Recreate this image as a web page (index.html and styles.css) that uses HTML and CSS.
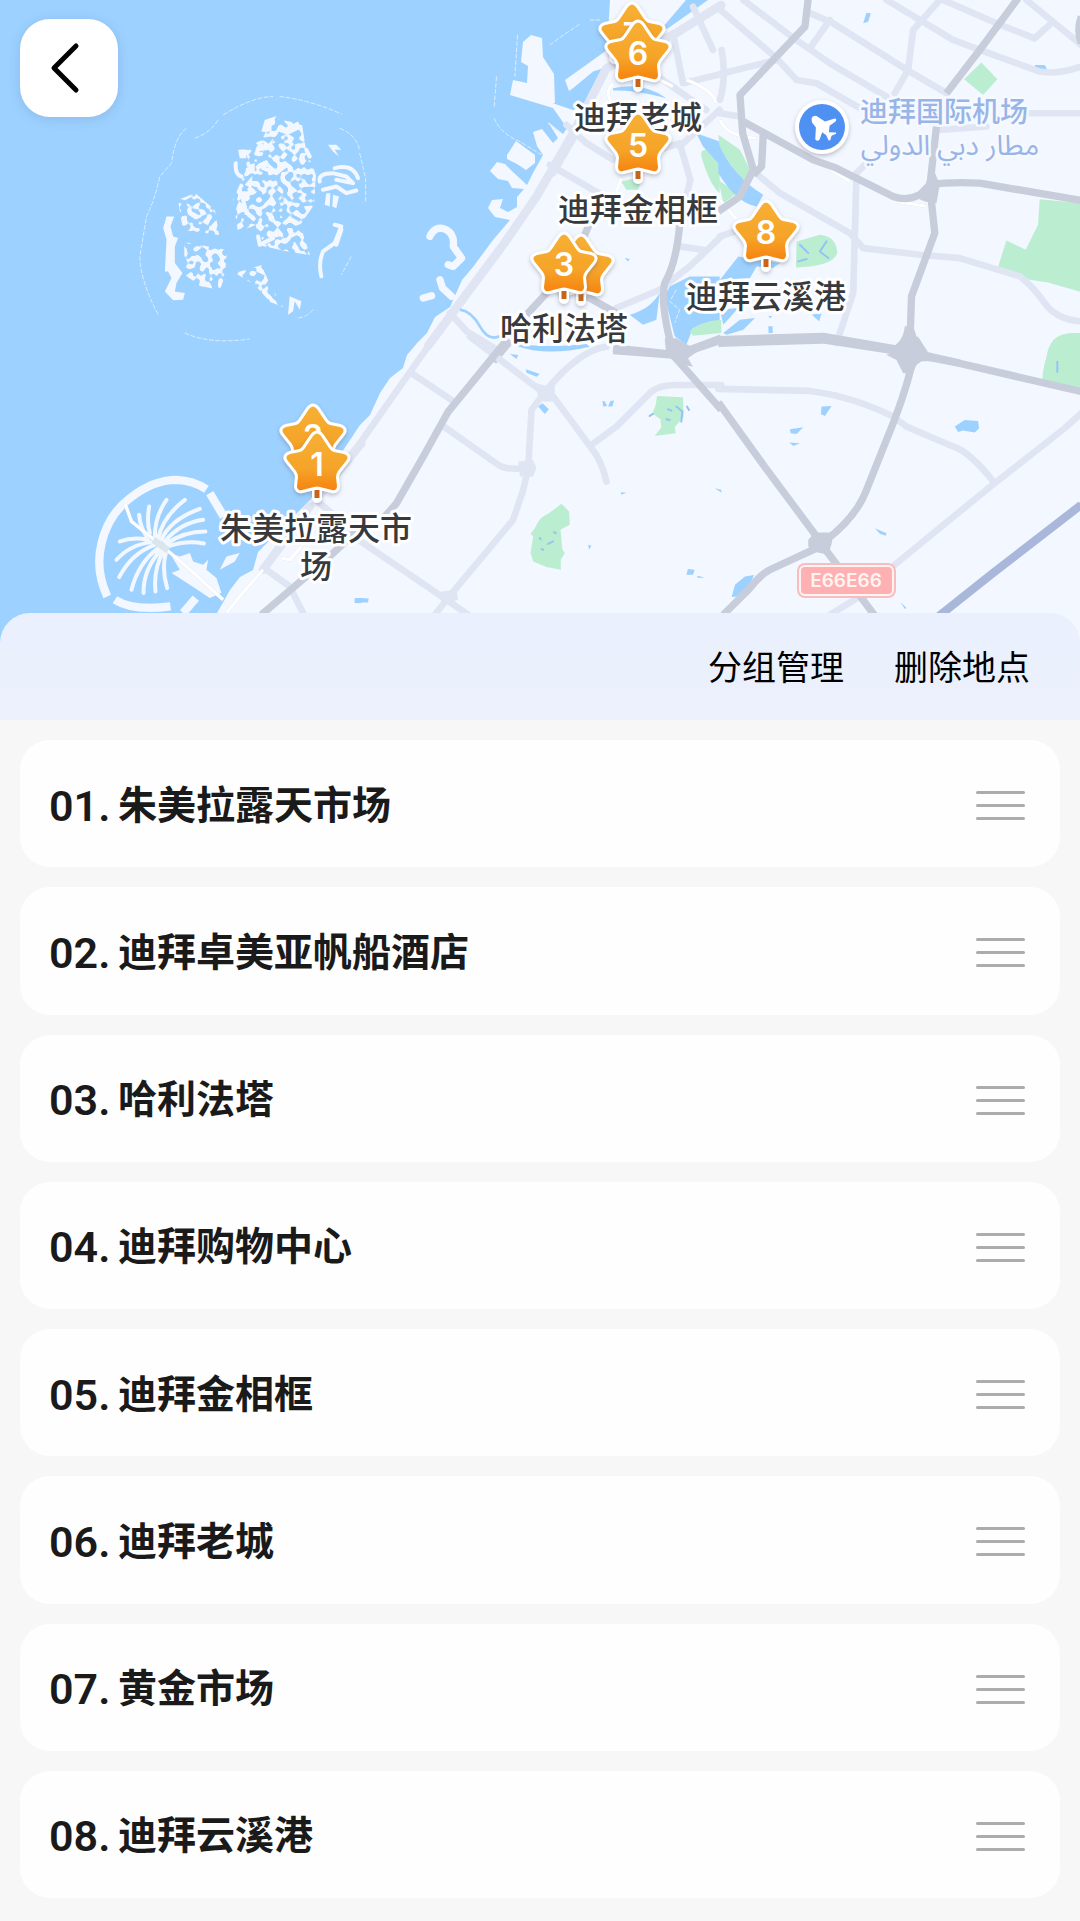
FILE: index.html
```html
<!DOCTYPE html>
<html lang="zh-CN">
<head>
<meta charset="utf-8">
<meta name="viewport" content="width=device-width, initial-scale=1">
<title>地点管理</title>
<link rel="stylesheet" href="styles.css">
</head>
<body>
<main class="page">
  <section class="map" aria-label="迪拜地图">
    <svg class="map-canvas" viewBox="0 0 1080 650" preserveAspectRatio="xMidYMin slice">
      <defs>
        <linearGradient id="gold" x1="0" y1="0" x2="0" y2="1">
          <stop offset="0" stop-color="#f7b033"/>
          <stop offset=".62" stop-color="#f5a429"/>
          <stop offset="1" stop-color="#f68410"/>
        </linearGradient>
        <filter id="lift" x="-30%" y="-30%" width="160%" height="160%">
          <feDropShadow dx="0" dy="2" stdDeviation="2" flood-color="#5b6478" flood-opacity=".4"/>
        </filter>
        <filter id="islets" x="0" y="0" width="1" height="1" color-interpolation-filters="sRGB">
          <feTurbulence type="fractalNoise" baseFrequency=".16" numOctaves="1" seed="8"/>
          <feColorMatrix values="0 0 0 0 1  0 0 0 0 1  0 0 0 0 1  16 0 0 0 -7.7" result="grain"/>
          <feComposite in="SourceGraphic" in2="grain" operator="in"/>
        </filter>
        <g id="star">
          <path class="stem-edge" d="M0 26V34"/>
          <path class="star-body" d="M-4-28Q0-33 4-28L12-16Q14-13 17-12L27-10Q33-8 29-3L21 7Q19 10 19 13L20 22Q20 27 15 26L3 23Q0 22-3 23L-15 26Q-20 27-20 22L-19 13Q-19 10-21 7L-29-3Q-33-8-27-10L-17-12Q-14-13-12-16Z"/>
          <path class="stem" d="M0 26V34"/>
        </g>
      </defs>

      <rect class="sea" width="1080" height="650"/>

      <!-- mainland -->
      <path class="land" d="M190 650L217 613 230 590 240 577 253 570 258 552 280 530 310 500 340 455 360 425 370 415 380 393 390 378 403 368 407 355 418 342 427 333 435 317 450 307 462 280 473 267 493 240 510 220 495 217 488 208 492 200 503 199 500 208 508 212 517 207 517 197 524 189 512 188 508 181 498 179 490 171 497 162 505 164 513 172 527 185 533 173 543 155 537 146 533 132 542 129 553 143 558 138 548 122 563 134 567 128 553 108 510 95 513 80 527 83 528 66 521 62 523 42 531 35 542 38 543 57 554 74 555 104 573 110 580 107 592 95 598 76 604 68 569 91 565 80 607 50 610 0H1080V650Z"/>
      <path class="land" d="M507 155L516 141 535 155 535 163 526 170 517 164 507 159Z"/>
      <path class="sea" d="M663 27L686 0H708L667 29Z"/>

      <!-- The World archipelago -->
      <path class="land" filter="url(#islets)" d="M262 140L272 118 302 124 306 150 316 175 314 205 300 225 310 255 290 252 258 245 256 225 238 232 233 200 246 170 240 150ZM178 200L195 193 215 210 219 235 183 230ZM184 242L227 250 225 275 220 290 200 286 185 275ZM235 273L262 265 270 285 283 307 270 302 255 285Z"/>
      <g transform="scale(.333)">
        <path class="land" d="M795 360L830 348 805 398 785 395ZM835 395L895 365 905 385 865 405ZM765 455L780 425 800 440 820 415 815 450ZM715 450L735 450 740 475 720 475ZM745 495L765 490 765 520 748 520ZM735 555L758 528 755 565ZM985 435L1010 435 1025 450 1005 450 1018 470 1000 455ZM500 650L523 650 512 680 520 710 535 715 525 740 525 790 548 820 530 850 525 875 555 880 550 900 520 902 495 875 515 835 505 815 495 815 500 720 490 685ZM865 945L870 890 905 905 900 930 885 905 880 935ZM980 580L992 580 990 620 975 615ZM1000 585L1018 590 1010 625 998 620Z"/>
        <path class="isle-line" stroke-width="12" d="M960 545Q955 520 1000 520L1040 530 1060 550 1010 540M970 570L1010 560 1040 580 1070 572M1005 505Q1060 490 1075 535M1005 675L1025 680 1005 730 970 755Q955 790 965 830M1025 690L1010 735M775 710L780 735 820 715M720 580L750 580 730 600 740 640M790 505L830 520 855 500M920 450L930 470M708 490Q705 525 725 530"/>
        <path class="reef" d="M560 385Q525 410 515 490L480 530Q465 600 440 650L420 770Q420 840 475 945M585 415Q630 400 655 360M670 345Q760 290 820 290M840 290Q930 300 1025 342M1020 385Q1070 405 1080 450M1055 770L1025 825M940 930Q920 955 890 955M555 1000Q630 1035 750 1018M1080 460Q1095 520 1098 540V605"/>
      </g>

      <!-- northern coast and creek -->
      <g transform="translate(360 0) scale(.333)">
        <path class="green" d="M785 545L850 530 835 570 800 570ZM1025 455L1080 430V580Q1050 555 1025 470Z"/>
        <path class="isle-line" stroke-width="22" d="M210 710Q225 675 260 690 285 705 280 740L305 775 280 800 265 795M240 840L248 865 275 890M190 895L215 888"/>
        <path class="reef" d="M473 105L465 230M410 230L403 320M403 355Q420 400 480 425L545 465M570 135Q610 105 660 72M690 60L720 60M565 370L600 400"/>
        <path class="sea" d="M580 312L690 295 730 205 700 215 610 290ZM760 265Q850 245 920 295L880 285Q810 270 760 272ZM1010 400L1080 425 1085 500 1030 440ZM810 945Q870 930 900 880L890 960 850 975ZM930 860L990 830H1080V970L1000 985 980 1035 945 1010 915 890ZM795 775L810 778 805 785Z"/>
        <path class="green" d="M990 995Q1020 965 1085 960V1000L1000 1008Z"/>
        <path class="reef" d="M950 870L930 905 960 930 945 970"/>
        <path class="road arterial" d="M205 1038L285 930 430 735 530 590 640 400 740 205 940 105 1085 15"/>
        <path class="road" d="M620 375L680 430 760 480M570 495L700 570 755 600M270 940L320 995 420 1055M940 100L970 250 1085 222M1000 20L1060 150M880 220L1040 330M960 440L1080 330M900 450L960 430 992 540 960 680M1085 710L990 800 900 870 770 925M960 740L1030 750M650 400L580 520"/>
        <path class="street" d="M760 250Q730 280 765 320M890 235L940 260M980 240Q1060 270 1070 310M785 535L765 590"/>
        <path class="highway" d="M690 670L660 740M565 875L500 945M680 890L770 940M960 675Q950 790 915 850 900 920 945 1075M760 1045L950 1065 1085 1015M400 1085L450 1025"/>
        <path class="stream" d="M300 930Q335 935 360 980T420 1010"/>
      </g>

      <!-- airport quarter -->
      <g transform="translate(720 0) scale(.333)">
        <path class="green" d="M733 238L785 188 833 238 790 285ZM960 598L1085 610V877L985 848 930 840 835 802 860 722 918 750 955 675ZM230 725L300 705Q350 710 352 760 340 800 228 803ZM-5 405L60 450 95 520 80 560 0 450ZM-5 540L50 580 10 610ZM980 1080Q985 1000 1060 1000H1085V1090Z"/>
        <path class="sea" d="M-5 430Q40 530 130 585L110 620Q50 610-5 520ZM55 770L180 790 160 805 110 800 90 835 0 840ZM275 945L305 940 298 965ZM430 70L440 38 453 40 445 65ZM945 195L975 195 982 208 950 212ZM145 980H158V1000H146ZM0 930L55 925 10 975ZM10 1000L60 960 105 955 70 990 20 1005ZM145 950L158 948 150 956Z"/>
        <path class="brook" d="M240 735L265 760M320 725L300 755 325 775M235 785L260 778"/>
        <path class="road" d="M-10 20L170 175 230 240 290 250 420 325M70 0L215 110 330 190 500 290M260 35L340 70 570 215 680 280M330 60L270 145M500 0L600 60 700 120 780 150 960 215Q1010 225 1085 200M660 0L580 90 565 210 525 280M670 0L830 70 945 115 1000 65M920 0L1085 135M0 222L170 180M5 150Q20 230 0 300M660 390L800 380M930 340H1085M120 530L180 580 390 700 430 745 600 765 720 775 900 830Q940 860 975 910T1085 965M440 490L410 520 405 700 400 880 350 1030M0 340L60 350M0 710L60 690"/>
        <path class="street" d="M0 360Q20 410 110 415M200 430L270 470 390 545M0 600L50 660M530 605L620 620"/>
        <path class="highway" d="M265-5L255 80 60 285 68 400 100 510 60 590-5 635M70 365L280 480 350 505 520 590Q560 605 600 585L635 550M130 400L125 500 100 525M895-5L780 150 680 280M650 380L630 560 645 700 575 890 570 1045M620 555Q700 545 780 550L1085 602M-5 1020L310 1010 540 1050 720 1090M1085 50Q1070 90 1085 130"/>
        <path class="junction" d="M638 500L660 555 650 610 615 605 580 590 620 550ZM555 980H580L600 1040 640 1085H560L510 1045Q550 1030 555 980Z"/>
      </g>

      <!-- Palm Jumeirah -->
      <g transform="translate(0 340) scale(.333)">
        <path class="isle-line breakwater" stroke-width="25" d="M322 770Q285 690 305 610 325 525 390 475 460 420 530 420 580 422 620 448M630 460L672 530M345 780Q400 815 512 800M588 775L550 820"/>
        <path class="isle-line" stroke-width="12" d="M440 590Q420 560 418 525M450 580Q440 545 448 500M465 590Q465 530 500 480M475 595Q490 530 555 480M485 600Q510 540 600 507M495 605Q540 550 610 540M500 612Q550 575 617 575M505 620Q560 600 612 611M445 600Q400 590 360 605M455 607Q390 615 350 660M465 615Q395 640 358 712M475 625Q415 670 395 750M482 632Q430 690 431 760M490 635Q460 690 467 755M498 640Q485 690 502 745"/>
        <path class="land" d="M510 640L540 650 570 640 580 665 610 675 625 660 620 690 650 715 665 760 630 775 570 735 515 700 540 690ZM660 690L680 650 720 640 705 665Z"/>
        <path class="street" d="M375 490L395 545 500 630 560 680 670 780"/>
        <path class="mid-quay" d="M460 600L505 632"/>
        <path class="road arterial" d="M930 500L790 690M1085 310L960 465"/>
        <path class="road" d="M800 690L870 740 910 820M960 490L1080 590"/>
        <path class="street" d="M680 820L720 770 790 690M845 655L870 660 905 620"/>
        <path class="highway" d="M785 825L990 650 1085 560"/>
        <path class="sea" d="M1065 775H1085V790H1065Z"/>
      </g>

      <!-- southern inland -->
      <g transform="translate(360 340) scale(.333)">
        <path class="green" d="M892 168L970 172 972 230 945 262 948 280 885 288 905 262 902 238 878 220 888 195ZM605 492L628 515 630 555 602 570 608 630 615 640 603 660V690L560 682 520 665 512 640 520 590 512 582 525 565Q540 530 565 522Z"/>
        <path class="brook" d="M925 208L935 212M920 238L930 240M950 200L968 215 965 245M540 595L542 598M565 612L580 605M545 628L550 630M583 577L588 580M982 200L988 210M870 228L880 222"/>
        <path class="sea" d="M470 10Q540 25 680 12L690 20Q560 50 470 18ZM498 88L540 102 530 110 500 98ZM535 200L548 190 567 208 555 222ZM728 183L735 184 742 198 730 200ZM752 183L763 182 758 200 745 200ZM450 42L475 45 470 57ZM783 457L800 459 785 465ZM1065 445L1085 450V458ZM685 615L695 618 688 630ZM868 675L885 682ZM985 688L1005 690 1000 705 980 705ZM1012 708L1035 713 1015 715ZM0 775L26 776 24 788H0Z"/>
        <path class="road" d="M225-10L0 310M155 100L275 180M245 255L420 378Q440 390 500 385M330-10L540 150 580 170 640 250 695 325Q725 360 740 425M740 20Q660 30 560 150L515 210 505 385 490 450 460 540 260 780 225 825M-5 600L260 780 325 825M695 315L770 260 875 155Q900 135 950 135H1085"/>
        <path class="road-node" d="M530 130L560 138 585 130V185H535ZM475 365L520 360 530 385 520 410H480ZM245 755L290 750 295 780 245 795Z"/>
        <path class="highway" d="M445-5L265 215 190 350 110 490 75 530M760 32L940 45 1085 210M940 50L1085 0"/>
        <path class="junction" d="M915-5H950L985 15 1020 30 985 55 1000 80 950 70 920 45Z"/>
      </g>
      <g transform="translate(720 340) scale(.333)">
        <path class="green" d="M967 125Q975 0 1050-20H1085V148Z"/>
        <path class="sea" d="M305 200L335 198 315 228 303 222ZM210 268L250 262 230 282 212 280ZM208 308L240 310 220 318ZM705 260L735 240 775 243 778 265 765 278 730 272 715 276ZM465 565L500 580 498 588 480 582ZM35 772L45 735 75 710 102 706 90 735 50 770ZM542 787L560 805 555 808Z"/>
        <path class="road" d="M-5 147L270 153Q400 170 520 230L560 260 700 320Q750 335 825 430M1085 220L1035 265 825 430 665 560 525 675M420 770L330 825"/>
        <path class="highway" d="M-5 187L130 375 290 590M-5 10L310 0 540 35 720 70 1085 155M575 80Q550 180 500 300L440 450Q410 530 320 600M290 625L150 690Q120 705 90 745L10 825M310 620L470 835"/>
        <path class="junction" d="M555-10H595L630 45 590 75 578 100H550L530 60 500 45 550 20ZM285 578H330L337 605 325 645 280 635 265 620V600Z"/>
        <path class="rail" d="M650 835L820 700 1085 495"/>
        <path class="brook" d="M1013 65V95"/>
      </g>

      <!-- route shield -->
      <g class="shield">
        <rect class="shield-edge" x="797" y="563" width="99" height="35" rx="8"/>
        <rect class="shield-plate" x="800" y="566" width="93" height="29" rx="5"/>
        <text x="846" y="587">E66E66</text>
      </g>

      <!-- airport -->
      <g filter="url(#lift)"><circle cx="822" cy="127" r="27" fill="#fff"/></g>
      <circle cx="822" cy="127" r="23" fill="#4f90f3"/>
      <path fill="#fff" transform="translate(720 0) scale(.333)" d="M275 355Q278 345 290 348L315 365 345 356Q352 357 347 365L329 378 327 397 348 398 349 402 335 408 331 421 326 422 319 406 307 397 299 419Q292 427 286 418L288 383 276 367Z"/>
      <g class="airport-name">
        <text x="860" y="122">迪拜国际机场</text>
        <text class="arabic" x="950" y="155" text-anchor="middle" lang="ar">مطار دبي الدولي</text>
      </g>

      <!-- saved places -->
      <g class="place">
        <g filter="url(#lift)"><use href="#star" x="632" y="35"/></g><text class="num" x="632" y="46">7</text>
        <g filter="url(#lift)"><use href="#star" x="638" y="53"/></g><text class="num" x="638" y="65">6</text>
        <text class="name" x="638" y="129">迪拜老城</text>
        <g filter="url(#lift)"><use href="#star" x="638" y="145"/></g><text class="num" x="638" y="157">5</text>
        <text class="name" x="638" y="221">迪拜金相框</text>
        <g filter="url(#lift)"><use href="#star" x="581" y="267"/></g>
        <g filter="url(#lift)"><use href="#star" x="564" y="265"/></g><text class="num" x="564" y="276">3</text>
        <text class="name" x="564" y="340">哈利法塔</text>
        <g filter="url(#lift)"><use href="#star" x="766" y="233"/></g><text class="num" x="766" y="244">8</text>
        <text class="name" x="766" y="308">迪拜云溪港</text>
        <g filter="url(#lift)"><use href="#star" x="313" y="437"/></g><text class="num" x="313" y="448">2</text>
        <g filter="url(#lift)"><use href="#star" x="317" y="464"/></g><text class="num" x="317" y="476">1</text>
        <text class="name" x="316" y="540">朱美拉露天市</text>
        <text class="name" x="316" y="578">场</text>
      </g>
    </svg>
    <button class="back" type="button" aria-label="返回">
      <svg width="32" height="54" viewBox="0 0 32 54"><path d="M27 5L5 27 27 49"/></svg>
    </button>
  </section>

  <section class="sheet">
    <header class="toolbar">
      <button type="button">分组管理</button>
      <button type="button">删除地点</button>
    </header>
    <ol class="places">
      <li class="card"><span class="index">01.</span><span class="title">朱美拉露天市场</span><button class="grip" type="button" aria-label="拖动排序"><i></i><i></i><i></i></button></li>
      <li class="card"><span class="index">02.</span><span class="title">迪拜卓美亚帆船酒店</span><button class="grip" type="button" aria-label="拖动排序"><i></i><i></i><i></i></button></li>
      <li class="card"><span class="index">03.</span><span class="title">哈利法塔</span><button class="grip" type="button" aria-label="拖动排序"><i></i><i></i><i></i></button></li>
      <li class="card"><span class="index">04.</span><span class="title">迪拜购物中心</span><button class="grip" type="button" aria-label="拖动排序"><i></i><i></i><i></i></button></li>
      <li class="card"><span class="index">05.</span><span class="title">迪拜金相框</span><button class="grip" type="button" aria-label="拖动排序"><i></i><i></i><i></i></button></li>
      <li class="card"><span class="index">06.</span><span class="title">迪拜老城</span><button class="grip" type="button" aria-label="拖动排序"><i></i><i></i><i></i></button></li>
      <li class="card"><span class="index">07.</span><span class="title">黄金市场</span><button class="grip" type="button" aria-label="拖动排序"><i></i><i></i><i></i></button></li>
      <li class="card"><span class="index">08.</span><span class="title">迪拜云溪港</span><button class="grip" type="button" aria-label="拖动排序"><i></i><i></i><i></i></button></li>
    </ol>
  </section>
</main>
</body>
</html>
```
FILE: styles.css
```css
* {
  box-sizing: border-box;
}

body {
  margin: 0;
  background: #f7f7f7;
  color: #1a1a1a;
  font-family: Roboto, "Noto Sans CJK SC", sans-serif;
}

button {
  margin: 0;
  padding: 0;
  border: 0;
  background: none;
  color: inherit;
  font: inherit;
  cursor: pointer;
}

.page {
  display: flex;
  flex-direction: column;
  min-height: 100vh;
}

/* Map */
.map {
  position: relative;
  aspect-ratio: 1080 / 643;
  overflow: hidden;
  background: #9dd1ff;
}

.map-canvas {
  display: block;
  width: 100%;
  height: 100%;
}

.sea { fill: #9dd1ff; }
.land { fill: #f3f7ff; }
.green { fill: #bbeed0; }
.junction { fill: #c8cddb; }
.road-node { fill: #e0e5f4; }

.road,
.highway,
.street,
.rail,
.isle-line,
.reef,
.stream,
.brook,
.mid-quay {
  fill: none;
  stroke-linejoin: round;
}

.road { stroke: #e0e5f4; stroke-width: 20; stroke-linecap: round; }
.road.arterial { stroke-width: 26; }
.highway { stroke: #c8cddb; stroke-width: 22; }
.street { stroke: #fff; stroke-width: 10; filter: drop-shadow(0 0 2px #c9cfd8); }
.rail { stroke: #a9b8da; stroke-width: 25; }
.isle-line { stroke: #f3f7ff; stroke-linecap: round; }
.isle-line.breakwater { stroke-linecap: butt; }
.reef { stroke: #dcedff; stroke-width: 3; stroke-dasharray: 14 5; }
.stream { stroke: #9dd1ff; stroke-width: 8; }
.brook { stroke: #93c4f5; stroke-width: 6; stroke-linecap: round; }
.mid-quay { stroke: #dbe6ec; stroke-width: 20; }

.star-body {
  fill: url(#gold);
  stroke: #fff;
  stroke-width: 6;
  stroke-linejoin: round;
  paint-order: stroke;
}

.stem { fill: none; stroke: #c96418; stroke-width: 5; }
.stem-edge { fill: none; stroke: #fff; stroke-width: 10; stroke-linecap: round; }

.num {
  fill: #fff;
  font: 600 32px Inter, sans-serif;
  text-anchor: middle;
}

.name {
  fill: #38393c;
  stroke: #fff;
  stroke-width: 6;
  stroke-linejoin: round;
  paint-order: stroke;
  font: 500 32px "Noto Sans CJK SC", sans-serif;
  text-anchor: middle;
}

.airport-name {
  fill: #98b5e8;
  stroke: #f6f9ff;
  stroke-width: 5;
  stroke-linejoin: round;
  paint-order: stroke;
  font: 500 28px "Noto Sans CJK SC", sans-serif;
}

.arabic {
  font: 400 28px "Noto Sans Arabic", "DejaVu Sans", sans-serif;
}

.shield-edge { fill: #fbbcbc; }
.shield-plate { fill: #ffb0b2; stroke: #fff4f4; stroke-width: 2; }
.shield text {
  fill: #fff4f0;
  font: 600 19px Inter, sans-serif;
  text-anchor: middle;
}

.back {
  position: absolute;
  top: 19px;
  left: 20px;
  display: grid;
  place-items: center;
  width: 98px;
  height: 98px;
  padding-right: 8px;
  border-radius: 30px;
  background: #fff;
  box-shadow: 0 2px 12px rgb(60 90 130 / 18%);
}

.back path {
  fill: none;
  stroke: #000;
  stroke-width: 5;
  stroke-linecap: round;
  stroke-linejoin: round;
}

/* Sheet */
.sheet {
  position: relative;
  display: flex;
  flex: 1;
  flex-direction: column;
  margin-top: -30px;
}

.toolbar {
  display: flex;
  align-items: center;
  justify-content: flex-end;
  gap: 50px;
  padding: 29px 50px 26px;
  border-radius: 30px 30px 0 0;
  background: linear-gradient(#eaf0fd, #edf0fd);
  color: #000;
  font-size: 34px;
  line-height: 52px;
}

.places {
  display: flex;
  flex: 1;
  flex-direction: column;
  gap: 20px;
  margin: 0;
  padding: 20px 20px 23px;
  background: #f7f7f7;
  list-style: none;
}

.card {
  display: flex;
  flex: 1;
  align-items: center;
  min-height: 96px;
  padding: 4px 35px 0 29px;
  border-radius: 30px;
  background: #fefefe;
}

.index {
  width: 69px;
  font-size: 43px;
  font-weight: 600;
  line-height: 52px;
}

.title {
  flex: 1;
  font-size: 39px;
  font-weight: 700;
  line-height: 52px;
}

.grip {
  display: flex;
  flex-direction: column;
  gap: 10px;
  width: 49px;
}

.grip i {
  height: 3px;
  border-radius: 2px;
  background: #acacac;
}
```
